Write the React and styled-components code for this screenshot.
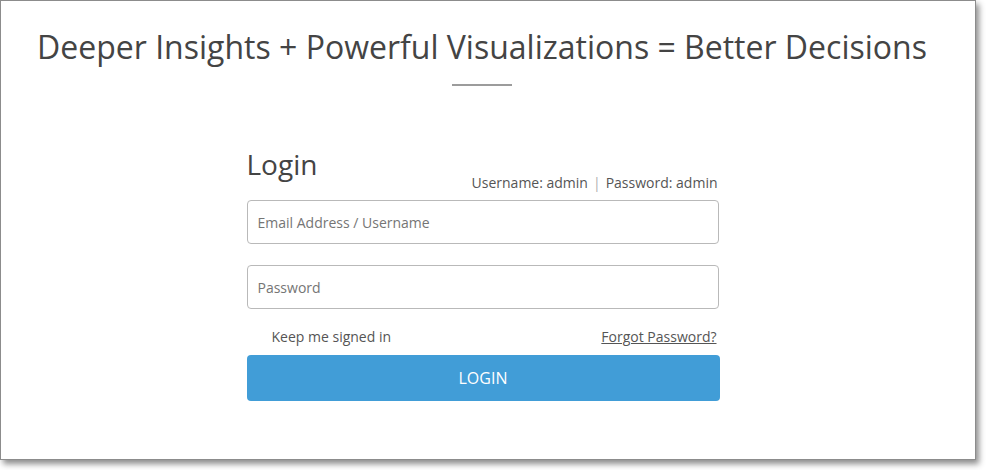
import styled, { createGlobalStyle } from "styled-components";

const GlobalStyle = createGlobalStyle`
    html, body {
        margin: 0;
        padding: 0;
        background: #fff;
        min-height: 470px;
    }
    body {
        font-family: "Open Sans", "Liberation Sans", sans-serif;
        color: #444;
    }
`;

const Frame = styled.div`
    box-sizing: border-box;
    width: 976px;
    height: 460px;
    border: 1px solid #8c8c8c;
    box-shadow: 3px 4px 6px rgba(0, 0, 0, 0.45);
    background: #fff;
    display: flex;
    flex-direction: column;
    align-items: center;
    padding-right: 12px;
`;

const Headline = styled.h1`
    margin: 24px 0 0;
    font-size: 32px;
    line-height: 44px;
    font-weight: 400;
    color: #444;
    white-space: nowrap;
`;

const Divider = styled.hr`
    width: 60px;
    height: 2px;
    border: 0;
    margin: 15px 0 0;
    background: #9c9c9c;
`;

const LoginForm = styled.form`
    width: 473px;
    margin-top: 59px;
    margin-left: 2px;
    display: flex;
    flex-direction: column;
`;

const FormHeader = styled.div`
    display: flex;
    justify-content: space-between;
    align-items: flex-end;
    padding-right: 2px;
    margin-bottom: 8px;
`;

const Title = styled.h2`
    margin: 0 0 9px 0;
    font-size: 28px;
    line-height: 38px;
    font-weight: 400;
    color: #444;
`;

const Credentials = styled.div`
    font-size: 14px;
    line-height: 19px;
    color: #555;

    span {
        color: #b0b0b0;
        margin: 0 5px;
    }
`;

const Field = styled.input`
    box-sizing: border-box;
    width: 472px;
    height: 44px;
    padding: 0 10px;
    border: 1px solid #b9b9b9;
    border-radius: 4px;
    font-family: inherit;
    font-size: 14px;
    color: #444;
    margin-bottom: ${p => p.$gap || 0}px;
    outline: none;

    ::placeholder {
        color: #9a9a9a;
    }
`;

const OptionsRow = styled.div`
    display: flex;
    justify-content: space-between;
    align-items: center;
    font-size: 14px;
    line-height: 19px;
    margin: 18px 3px 9px 25px;
    color: #555;
`;

const ForgotLink = styled.a`
    color: #555;
    text-decoration: underline;
    cursor: pointer;
`;

const LoginButton = styled.button`
    height: 46px;
    border: 0;
    border-radius: 4px;
    background: #419dd7;
    color: #fff;
    font-family: inherit;
    font-size: 16px;
    cursor: pointer;
`;

export default function App() {
    return (
        <>
            <GlobalStyle />
            <Frame>
                <Headline>Deeper Insights + Powerful Visualizations = Better Decisions</Headline>
                <Divider />
                <LoginForm onSubmit={e => e.preventDefault()}>
                    <FormHeader>
                        <Title>Login</Title>
                        <Credentials>
                            Username: admin<span>|</span>Password: admin
                        </Credentials>
                    </FormHeader>
                    <Field type="text" placeholder="Email Address / Username" $gap={21} />
                    <Field type="password" placeholder="Password" />
                    <OptionsRow>
                        <span>Keep me signed in</span>
                        <ForgotLink>Forgot Password?</ForgotLink>
                    </OptionsRow>
                    <LoginButton type="submit">LOGIN</LoginButton>
                </LoginForm>
            </Frame>
        </>
    );
}
